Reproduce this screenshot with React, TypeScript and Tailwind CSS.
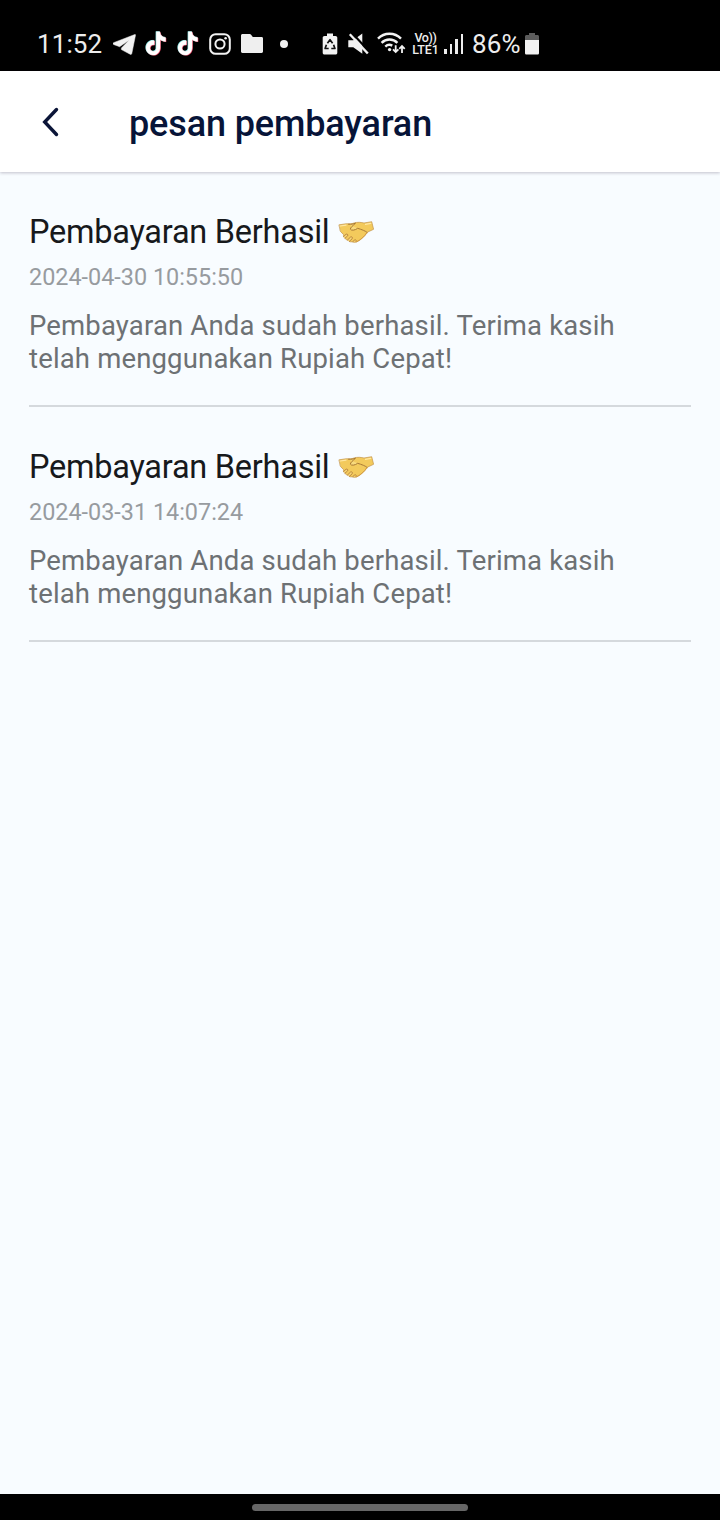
import React from "react";

interface Message {
    id: number;
    title: string;
    date: string;
    lines: string[];
}

const messages: Message[] = [
    {
        id: 1,
        title: "Pembayaran Berhasil",
        date: "2024-04-30 10:55:50",
        lines: ["Pembayaran Anda sudah berhasil. Terima kasih", "telah menggunakan Rupiah Cepat!"],
    },
    {
        id: 2,
        title: "Pembayaran Berhasil",
        date: "2024-03-31 14:07:24",
        lines: ["Pembayaran Anda sudah berhasil. Terima kasih", "telah menggunakan Rupiah Cepat!"],
    },
];

const tiktokPath =
    "M12.525.02c1.31-.02 2.61-.01 3.91-.02.08 1.53.63 3.09 1.75 4.17 1.12 1.11 2.7 1.62 4.24 1.79v4.03c-1.44-.05-2.89-.35-4.2-.97-.57-.26-1.1-.59-1.62-.93-.01 2.92.01 5.84-.02 8.75-.08 1.4-.54 2.79-1.35 3.94-1.31 1.92-3.58 3.17-5.91 3.21-1.43.08-2.86-.31-4.08-1.03-2.02-1.19-3.44-3.37-3.65-5.71-.02-.5-.03-1-.01-1.49.18-1.9 1.12-3.72 2.58-4.96 1.66-1.44 3.98-2.13 6.15-1.72.02 1.48-.04 2.96-.04 4.44-.99-.32-2.15-.23-3.02.37-.63.41-1.11 1.04-1.36 1.75-.21.51-.15 1.07-.14 1.61.24 1.64 1.82 3.02 3.5 2.87 1.12-.01 2.19-.66 2.77-1.61.19-.33.4-.67.41-1.06.1-1.79.06-3.57.07-5.36.01-4.03-.01-8.05.02-12.07z";

function TiktokIcon() {
    return (
        <svg className="w-[22px] h-[25px] shrink-0" viewBox="0.5 -0.7 23.5 25.7" preserveAspectRatio="none">
            <path d={tiktokPath} fill="#4fc9c8" transform="translate(-0.6 -0.5)" />
            <path d={tiktokPath} fill="#e8405f" transform="translate(0.8 0.5)" />
            <path d={tiktokPath} fill="#fff" stroke="#fff" strokeWidth="0.5" />
        </svg>
    );
}

function StatusBar() {
    return (
        <div className="h-[71px] bg-black text-[#ededed] flex items-center pl-[37px] pt-4">
            <span className="w-[76px] shrink-0 text-[26px] leading-[26px] tracking-[0.1px]">11:52</span>

            {/* notifications */}
            <svg className="w-[23px] h-[21px] mt-0.5 shrink-0" viewBox="0 0 23 21" fill="#f2f2f2">
                <path d="M21.8.5.6 8.7c-.8.3-.8 1.4 0 1.8l6 2.2 9.4-6.4-7.600 7.800v1.500l8.700 4.600c.8.5 1.500.2 1.700-.7L22.500 1.200c.1-.6-.2-.9-.7-.7Z" stroke="#f2f2f2" strokeWidth=".5" />
            </svg>
            <div className="flex gap-2.5 ml-[9px]">
                <TiktokIcon />
                <TiktokIcon />
            </div>
            <svg className="w-[22px] h-[22px] ml-2.5 shrink-0" viewBox="0 0 22 22" fill="none" stroke="#f2f2f2" strokeWidth="2">
                <rect x="1.2" y="1.2" width="19.6" height="19.6" rx="5.4" />
                <circle cx="11" cy="11" r="4.6" />
                <circle cx="16.6" cy="5.3" r="1.3" fill="#f2f2f2" stroke="none" />
            </svg>
            <svg className="w-[22px] h-[19px] ml-2.5 shrink-0" viewBox="0 0 22 19" fill="#efefef">
                <path d="M1.5 0h7.2c.5 0 .9.2 1.2.6L11.8 3h8.8c.8 0 1.4.6 1.4 1.4v13.2c0 .8-.6 1.4-1.4 1.4H1.4C.6 19 0 18.4 0 17.6V1.5C0 .7.7 0 1.5 0Z" />
            </svg>
            <span className="w-2 h-2 ml-[17px] rounded-full bg-[#f2f2f2] shrink-0" />

            {/* system icons */}
            <svg className="w-4 h-[22px] ml-[34px] shrink-0" viewBox="0 0 16 22">
                <path d="M5 .5h6V3h2.5c1 0 1.800.8 1.800 1.800v14.900c0 1-.8 1.800-1.800 1.800h-11c-1 0-1.800-.8-1.800-1.800V4.8C.7 3.8 1.5 3 2.5 3H5Z" fill="#f2f2f2" />
                <path d="m5.400 10.200 2.600-3.500 2.600 3.500M11.600 11.700l1.300 3.800H9.300M6.700 15.500H3.100l1.300-3.800" fill="none" stroke="#111" strokeWidth="1.700" strokeLinejoin="round" />
            </svg>
            <svg className="w-[22px] h-[22px] ml-2.5 shrink-0" viewBox="0 0 22 22">
                <path d="M.3 7.200h5L14.300.6v20.200l-9-6.500h-5Z" fill="#f2f2f2" />
                <path d="m3.600-.5 18 19.500" stroke="#000" strokeWidth="2.200" />
                <path d="m1.800 1.200 18 19.300" stroke="#f2f2f2" strokeWidth="2.400" />
            </svg>
            <svg className="w-[29px] h-[23px] ml-[7px] shrink-0" viewBox="0 0 29 23" fill="none" stroke="#f2f2f2" strokeWidth="2.4">
                <path d="M1 6.600a16 16 0 0 1 23 0M4.600 10.800a11 11 0 0 1 15.800 0M8.300 14.600a6 6 0 0 1 7-1" />
                <circle cx="12.6" cy="17.6" r="1.7" fill="#f2f2f2" stroke="none" />
                <path d="M18.700 13.200v6.800m-2.700-2.600 2.700 2.700 2.700-2.700M25 21v-7m-2.700 2.800 2.700-2.800 2.700 2.800" strokeWidth="1.8" />
            </svg>
            <div className="w-[27px] ml-[6px] shrink-0 flex flex-col items-center font-medium text-[12.5px] leading-[12px] whitespace-nowrap">
                <span className="tracking-[-0.4px] h-3">Vo))</span>
                <span className="h-3 tracking-[-0.1px]">LTE1</span>
            </div>
            <div className="w-[19px] h-5 ml-[5px] shrink-0 flex items-end justify-between">
                <span className="w-[2.5px] h-[5px] bg-[#ededed]" />
                <span className="w-[2.5px] h-[10px] bg-[#ededed]" />
                <span className="w-[2.5px] h-[15px] bg-[#ededed]" />
                <span className="w-[2.5px] h-5 bg-[#ededed]" />
            </div>
            <span className="w-[53px] ml-[9px] shrink-0 text-[26px] leading-[26px] tracking-[0.2px]">86%</span>
            <svg className="w-[14px] h-[22px] shrink-0" viewBox="0 0 14 22">
                <path d="M4 0h6v2h2.500c.8 0 1.500.7 1.500 1.500V8H0V3.500C0 2.700.7 2 1.500 2H4Z" fill="#5c5c5c" />
                <path d="M0 7h14v13c0 1-.7 1.500-1.500 1.500h-11C.7 21.500 0 21 0 20Z" fill="#f2f2f2" />
            </svg>
        </div>
    );
}

function Handshake() {
    return (
        <svg className="w-9 h-[25px] shrink-0" viewBox="0 0 36 25" strokeLinejoin="round" strokeLinecap="round">
            <path d="M1.300 4.800 8.500 3.700c2.500.3 5 .2 7.500-.7 3.500-1.200 7.500-.6 10 0l7.700-1.300 1.900 7.600-6.200 2.900c-2.500 4-6 7.300-10.400 9.600-2 .9-3.600.6-4.600 0-2.500.4-3.800-.5-4.400-1.700-2-.2-3-1.200-3-2.500-1.500-.5-1.900-1.600-1.300-2.800L2.500 11.400Z" fill="#f3ca5c" stroke="#c3944a" strokeWidth=".7" />
            <path d="M10.500 4.200c3 .4 4.500-.2 7-1-2.600 2.400-5.200 4.400-5.100 6 .7 1.600 4.600 1.200 7.300-.9 3.800 1.200 8 2.700 9.500 4.200" fill="#f8da7e" stroke="#a87833" strokeWidth="1" />
            <path d="m5.500 16.700 2.600-2.500c1.300-.5 2.200.6 1.500 1.700L7 18.200m2.600 1.700 3-2.900c1.400-.6 2.300.7 1.600 1.700l-2.900 2.700m3.500.2 2-1.700c1.300-.3 1.800.6 1.300 1.500" fill="#f9d879" stroke="#b27d38" strokeWidth=".9" />
            <path d="m2.300 6 5.700-.9M27.500 4.300l5.300-.9" fill="none" stroke="#ffe7a3" strokeWidth="1.2" />
            <path d="M28.800 12.700c-2.600 4-6 7-10 9" fill="none" stroke="#d69e42" strokeWidth="1" />
        </svg>
    );
}

function MessageItem({ message }: { message: Message }) {
    return (
        <li className="h-[235px] pt-10 border-b-2 border-[#d5d9dd]">
            <h2 className="flex items-center h-10 text-[32.5px] leading-10 tracking-[-0.25px] text-[#17191c]">
                <span className="w-[309px] whitespace-nowrap">{message.title}</span>
                <Handshake />
            </h2>
            <p className="mt-[5px] h-10 leading-10 text-[23.4px] text-[#979b9f]">{message.date}</p>
            <p className="mt-3 text-[27.5px] tracking-[0.16px] leading-[33px] text-[#6d7174] whitespace-nowrap">
                {message.lines.map((line) => (
                    <span key={line} className="block">{line}</span>
                ))}
            </p>
        </li>
    );
}

function App() {
    return (
        <div className="w-[720px] h-[1520px] flex flex-col bg-[#f8fcff] font-['Roboto',sans-serif] overflow-hidden">
            <StatusBar />

            <header className="h-[101px] shrink-0 bg-white flex items-center shadow-[0_1px_3px_rgba(30,20,50,0.25)]">
                <button className="w-[129px] h-full pl-[42px] cursor-pointer" aria-label="Kembali">
                    <svg className="w-[18px] h-[30px]" viewBox="0 0 18 30" fill="none" stroke="#0b1538" strokeWidth="3.4" strokeLinecap="round">
                        <path d="M14.500 2.500 2.700 15l11.800 12.500" />
                    </svg>
                </button>
                <h1 className="pt-[5px] text-[36px] leading-none tracking-[-0.12px] font-medium text-[#071438]">pesan pembayaran</h1>
            </header>

            <ul className="flex-1 px-[29px]">
                {messages.map((message) => (
                    <MessageItem key={message.id} message={message} />
                ))}
            </ul>

            <footer className="h-[26px] bg-black flex justify-center items-center">
                <div className="w-[216px] h-[7px] rounded-full bg-[#666]" />
            </footer>
        </div>
    );
}

export default App;
